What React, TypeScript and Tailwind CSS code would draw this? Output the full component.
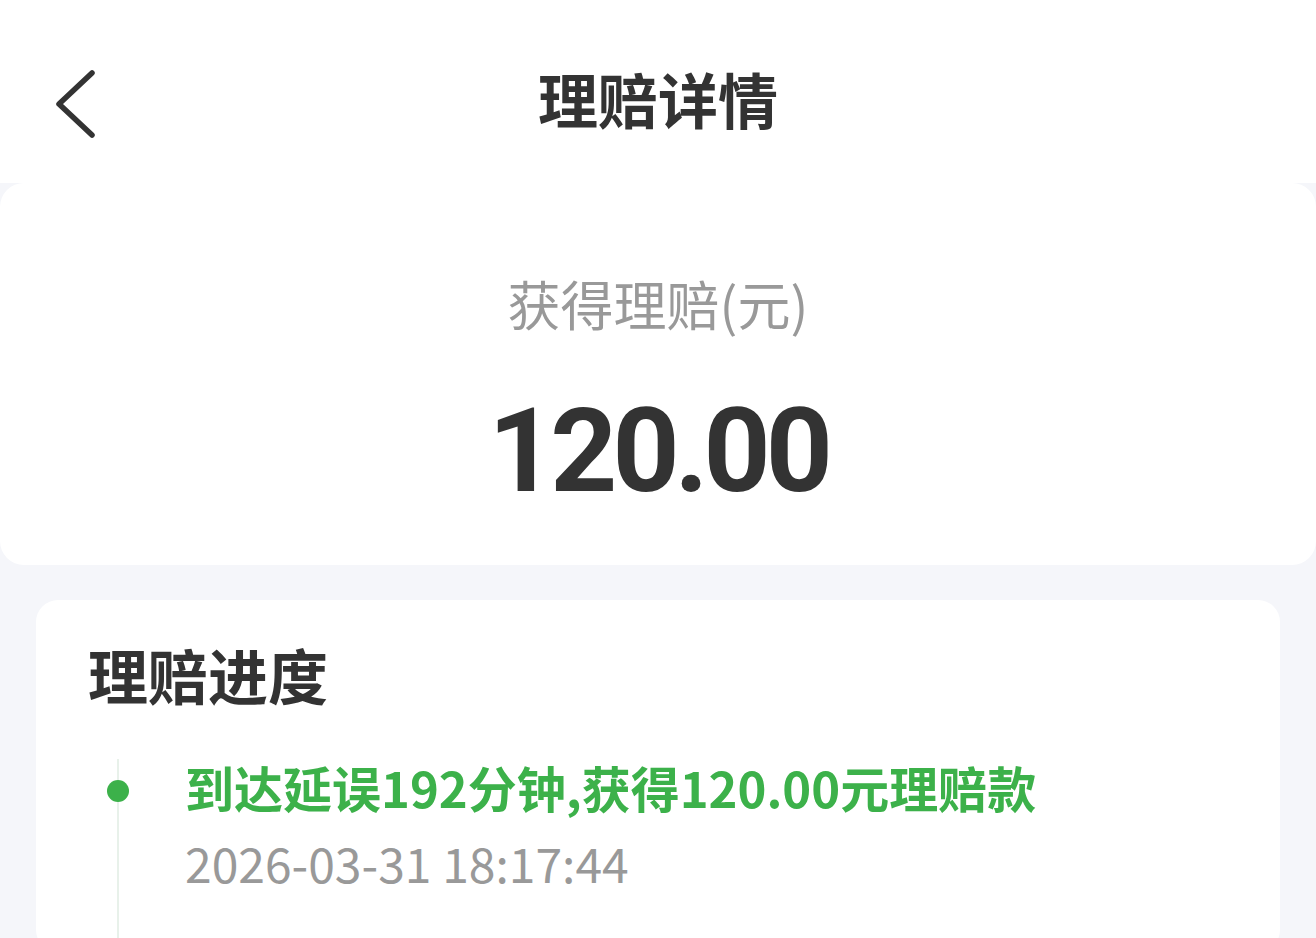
const cjk = "font-['Noto_Sans_CJK_SC','Noto_Sans',sans-serif]";

function BackIcon() {
  return (
    <svg width="44" height="70" viewBox="0 0 44 70" fill="none">
      <polyline
        points="38,4 5,35 38,66"
        stroke="#333"
        strokeWidth="5.5"
        strokeLinecap="round"
        strokeLinejoin="round"
      />
    </svg>
  );
}

export default function App() {
  return (
    <div className={`min-h-[938px] bg-[#f5f6fa] ${cjk} text-[#333]`}>
      <header className="relative flex h-[183px] items-center justify-center bg-white pt-[12px]">
        <button className="absolute left-[54px] top-[69px]">
          <BackIcon />
        </button>
        <h1 className="text-[60px] font-bold leading-none">理赔详情</h1>
      </header>

      <section className="flex h-[382px] flex-col items-center rounded-[24px] bg-white pt-[94px]">
        <p className="text-[53px] leading-none text-[#999]">获得理赔(元)</p>
        <p className="mt-[63px] font-['Roboto',sans-serif] text-[117px] font-bold leading-none tracking-[-5px]">
          120.00
        </p>
      </section>

      <section className="mx-[36px] mt-[35px] rounded-[22px] bg-white pl-[52px] pt-[44px] pb-[60px]">
        <h2 className="text-[60px] font-bold leading-none">理赔进度</h2>
        <div className="relative mt-[50px] pl-[97px]">
          <div className="absolute left-[29px] top-[5px] h-[260px] w-[2px] bg-[#e8f1ea]" />
          <div className="absolute left-[19px] top-[26px] h-[22px] w-[22px] rounded-full bg-[#3cb14a]" />
          <p className="pt-[3px] text-[49px] font-bold leading-[60px] text-[#3cb14a]">
            到达延误192分钟,获得120.00元理赔款
          </p>
          <p className="mt-[15px] text-[48px] leading-[60px] text-[#999]">2026-03-31 18:17:44</p>
        </div>
      </section>
    </div>
  );
}
